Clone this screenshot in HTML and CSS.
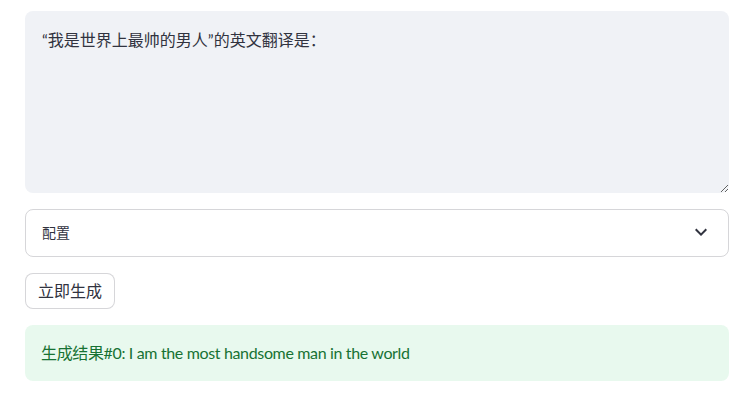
FILE: index.html
```html
<!DOCTYPE html>
<html lang="zh">
<head>
<meta charset="utf-8">
<link rel="stylesheet" href="styles.css">
</head>
<body>
<main class="app">
  <textarea class="prompt" readonly>“我是世界上最帅的男人”的英文翻译是：</textarea>
  <div class="expander">
    <span class="expander-label">配置</span>
    <svg class="chevron" width="24" height="24" viewBox="0 0 24 24"><path d="M7.4 8.6 12 13.2l4.6-4.6L18 10l-6 6-6-6z" fill="rgb(49,51,63)"/></svg>
  </div>
  <div class="actions"><button class="btn">立即生成</button></div>
  <div class="alert">生成结果#0: I am the most handsome man in the world</div>
</main>
</body>
</html>
```
FILE: styles.css
```css
html, body {
  margin: 0;
  padding: 0;
  background: #fff;
}
body {
  font-family: Lato, "Noto Sans CJK SC", sans-serif;
  color: rgb(49, 51, 63);
}
.app {
  padding: 11px 25px 0 25px;
  display: flex;
  flex-direction: column;
  gap: 16px;
}
.prompt {
  box-sizing: border-box;
  width: 100%;
  height: 182px;
  margin: 0;
  padding: 16px 16px 16px 17px;
  border: none;
  border-radius: 8px;
  background: #f0f2f6;
  color: rgb(49, 51, 63);
  font-family: Lato, "Noto Sans CJK SC", sans-serif;
  font-size: 16px;
  line-height: 1.6;
  resize: vertical;
  outline: none;
}
.expander {
  box-sizing: border-box;
  height: 48px;
  border: 1px solid rgba(49, 51, 63, 0.2);
  border-radius: 8px;
  display: flex;
  align-items: center;
  justify-content: space-between;
  padding: 0 15px 2px 16px;
}
.expander-label {
  font-size: 14px;
}
.chevron {
  display: block;
}
.actions {
  display: flex;
}
.btn {
  font-family: Lato, "Noto Sans CJK SC", sans-serif;
  font-size: 16px;
  line-height: 1.6;
  color: rgb(49, 51, 63);
  background: #fff;
  border: 1px solid rgba(49, 51, 63, 0.2);
  border-radius: 8px;
  padding: 4px 12px;
  margin: 0;
}
.alert {
  box-sizing: border-box;
  background: rgba(33, 195, 84, 0.1);
  color: rgb(23, 114, 51);
  border-radius: 8px;
  padding: 15px 16px 16px 16px;
  font-size: 16px;
  line-height: 1.6;
  letter-spacing: -0.35px;
}
```
